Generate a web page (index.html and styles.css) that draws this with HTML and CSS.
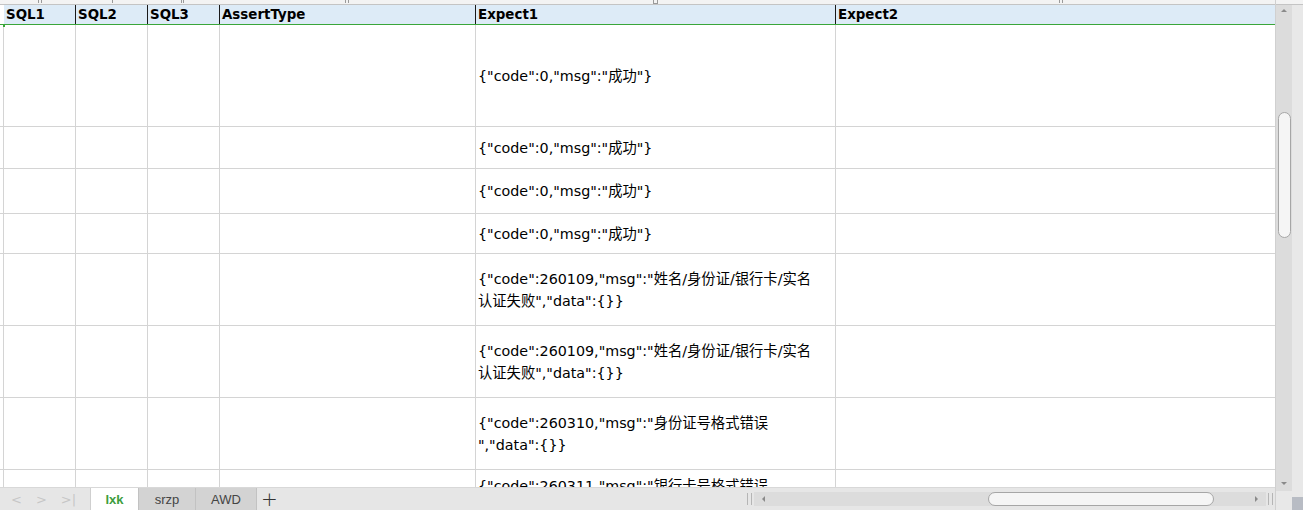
FILE: index.html
```html
<!DOCTYPE html>
<html>
<head>
<meta charset="utf-8">
<link rel="stylesheet" href="styles.css">
</head>
<body>
<div class="app">
  <div class="main">
    <div class="ruler">
      <span class="tick t1"></span><span class="tick t2"></span><span class="tick t3"></span><span class="tick t4"></span><span class="tick t5"></span><span class="tick t6"></span>
    </div>
    <div class="sheet">
      <div class="row head">
        <div class="c c0"></div>
        <div class="c w1">SQL1</div>
        <div class="c w1">SQL2</div>
        <div class="c w1">SQL3</div>
        <div class="c w2">AssertType</div>
        <div class="c w3">Expect1</div>
        <div class="c w4">Expect2</div>
      </div>
      <div class="row h102">
        <div class="c c0"></div><div class="c w1"></div><div class="c w1"></div><div class="c w1"></div><div class="c w2"></div>
        <div class="c w3">{"code":0,"msg":"成功"}</div><div class="c w4"></div>
      </div>
      <div class="row h42">
        <div class="c c0"></div><div class="c w1"></div><div class="c w1"></div><div class="c w1"></div><div class="c w2"></div>
        <div class="c w3">{"code":0,"msg":"成功"}</div><div class="c w4"></div>
      </div>
      <div class="row h45">
        <div class="c c0"></div><div class="c w1"></div><div class="c w1"></div><div class="c w1"></div><div class="c w2"></div>
        <div class="c w3">{"code":0,"msg":"成功"}</div><div class="c w4"></div>
      </div>
      <div class="row h40">
        <div class="c c0"></div><div class="c w1"></div><div class="c w1"></div><div class="c w1"></div><div class="c w2"></div>
        <div class="c w3">{"code":0,"msg":"成功"}</div><div class="c w4"></div>
      </div>
      <div class="row h72">
        <div class="c c0"></div><div class="c w1"></div><div class="c w1"></div><div class="c w1"></div><div class="c w2"></div>
        <div class="c w3">{"code":260109,"msg":"姓名/身份证/银行卡/实名<br>认证失败","data":{}}</div><div class="c w4"></div>
      </div>
      <div class="row h72">
        <div class="c c0"></div><div class="c w1"></div><div class="c w1"></div><div class="c w1"></div><div class="c w2"></div>
        <div class="c w3">{"code":260109,"msg":"姓名/身份证/银行卡/实名<br>认证失败","data":{}}</div><div class="c w4"></div>
      </div>
      <div class="row h72">
        <div class="c c0"></div><div class="c w1"></div><div class="c w1"></div><div class="c w1"></div><div class="c w2"></div>
        <div class="c w3">{"code":260310,"msg":"身份证号格式错误<br>","data":{}}</div><div class="c w4"></div>
      </div>
      <div class="row h72 last">
        <div class="c c0"></div><div class="c w1"></div><div class="c w1"></div><div class="c w1"></div><div class="c w2"></div>
        <div class="c w3 top">{"code":260311,"msg":"银行卡号格式错误<br>","data":{}}</div><div class="c w4"></div>
      </div>
    </div>
    <div class="bottombar">
      <div class="nav">
        <span class="navbtn">&lt;</span><span class="navbtn">&gt;</span><span class="navbtn">&gt;|</span>
      </div>
      <div class="tab active">lxk</div>
      <div class="tab">srzp</div>
      <div class="tab">AWD</div>
      <div class="plus">+</div>
      <div class="hspace"></div>
      <div class="grip"></div>
      <div class="htrack">
        <span class="arrow-l"></span>
        <div class="hthumb"></div>
        <span class="arrow-r"></span>
      </div>
      <div class="grip"></div>
    </div>
  </div>
  <div class="vbar">
    <div class="vtop"></div>
    <div class="vtrack">
      <span class="arrow-u"></span>
      <div class="vthumb"></div>
      <span class="arrow-d"></span>
    </div>
    <div class="corner"></div>
  </div>
</div>
</body>
</html>
```
FILE: styles.css
```css
* { box-sizing: border-box; }
html, body { margin: 0; padding: 0; }
body {
  width: 1303px;
  height: 510px;
  overflow: hidden;
  background: #ffffff;
  font-family: "DejaVu Sans", "Noto Sans CJK SC", sans-serif;
  color: #000;
}
.app {
  display: flex;
  width: 1303px;
  height: 510px;
}
.main {
  width: 1275px;
  display: flex;
  flex-direction: column;
  height: 510px;
}
.ruler {
  height: 5px;
  background: #f3f3f3;
  border-bottom: 1px solid #c4c4c4;
  position: relative;
  overflow: hidden;
}
.tick {
  position: absolute;
  top: 0;
  width: 4px;
  height: 3px;
  border-left: 1px solid #9a9a9a;
  border-right: 1px solid #9a9a9a;
}
.t1 { left: 38px; } .t2 { left: 112px; width: 1px; border-right: none; } .t3 { left: 181px; width: 3px; }
.t4 { left: 345px; } .t5 { left: 653px; width: 5px; height: 4px; border-bottom: 1px solid #9a9a9a; } .t6 { left: 1059px; }
.sheet {
  flex: 1;
  overflow: hidden;
  background: #fff;
}
.row {
  display: flex;
  border-bottom: 1px solid #d4d4d4;
}
.c {
  border-right: 1px solid #d4d4d4;
  padding-left: 2px;
  display: flex;
  align-items: center;
  font-size: 14.3px;
  line-height: 22px;
  white-space: nowrap;
  flex-shrink: 0;
}
.c0 { width: 4px; padding: 0; }
.w1 { width: 72px; }
.w2 { width: 256px; }
.w3 { width: 360px; }
.w4 { width: 439px; border-right: none; }
.head {
  height: 20px;
  background: #ddebf7;
  border-bottom: 1px solid #3aa63a;
  position: relative;
}
.head .c {
  border-right-color: #1a1a1a;
  font-family: "DejaVu Sans", sans-serif;
  font-weight: bold;
  font-size: 13.4px;
  line-height: 19px;
}
.head .c0 { background: #fff; border-right: none; width: 4px; }
.head .w4 { border-right: none; }
.head::after {
  content: "";
  position: absolute;
  left: 3px;
  bottom: -3px;
  width: 2px;
  height: 3px;
  background: #3aa63a;
}
.h102 { height: 102px; }
.h42 { height: 42px; }
.h45 { height: 45px; }
.h40 { height: 40px; }
.h72 { height: 72px; }
.last { border-bottom: none; }
.top { align-items: flex-start; padding-top: 5px; display: block; }
.bottombar {
  height: 23px;
  background: #e6e6e6;
  display: flex;
  align-items: stretch;
  border-top: 1px solid #d8d8d8;
}
.nav {
  width: 90px;
  display: flex;
  align-items: center;
  padding-left: 11px;
  gap: 14px;
  color: #c6c6c6;
  font-family: "DejaVu Sans", sans-serif;
  font-size: 13px;
}
.tab {
  display: flex;
  align-items: center;
  justify-content: center;
  font-family: "Liberation Sans", Arial, sans-serif;
  font-size: 13px;
  color: #444;
  background: #d3d3d3;
  border-left: 1px solid #c2c2c2;
}
.tab:nth-child(3) { width: 57px; }
.tab:nth-child(4) { width: 61px; }
.tab.active {
  width: 48px;
  background: #fff;
  color: #3d9d3d;
  font-weight: bold;
  border-left: 1px solid #cfcfcf;
}
.plus {
  width: 26px;
  display: flex;
  align-items: center;
  justify-content: center;
  font-family: "DejaVu Sans", sans-serif;
  font-size: 20px;
  font-weight: 300;
  color: #333;
  border-left: 1px solid #c2c2c2;
  line-height: 1;
}
.hspace { width: 463px; }
.grip {
  width: 9px;
  display: flex;
  align-items: center;
  justify-content: center;
}
.grip::before {
  content: "";
  width: 3px;
  height: 12px;
  border-left: 1px solid #b5b5b5;
  border-right: 1px solid #b5b5b5;
}
.htrack {
  width: 512px;
  margin: 4px 0 4px 0;
  background: #dcdcdc;
  display: flex;
  align-items: center;
  position: relative;
}
.arrow-l, .arrow-r {
  width: 0; height: 0;
  border-top: 3px solid transparent;
  border-bottom: 3px solid transparent;
  position: absolute;
  top: 4px;
}
.arrow-l { left: 8px; border-right: 3px solid #8a8a8a; }
.arrow-r { right: 8px; border-left: 3px solid #8a8a8a; }
.hthumb {
  position: absolute;
  left: 234px;
  top: 0;
  width: 226px;
  height: 14px;
  background: #f5f5f5;
  border: 1px solid #a6a6a6;
  border-radius: 7px;
}
.vbar {
  width: 28px;
  height: 510px;
  background: #e8e8e8;
  border-left: 1px solid #d0d0d0;
  display: flex;
  flex-direction: column;
}
.vtop {
  height: 5px;
  background: #f3f3f3;
  border-bottom: 1px solid #c4c4c4;
}
.vtrack {
  width: 16px;
  flex: 1;
  background: #dcdcdc;
  position: relative;
  margin-bottom: 19px;
}
.arrow-u, .arrow-d {
  position: absolute;
  left: 5px;
  width: 0; height: 0;
  border-left: 3px solid transparent;
  border-right: 3px solid transparent;
}
.arrow-u { top: 4px; border-bottom: 3px solid #8a8a8a; }
.arrow-d { bottom: 6px; border-top: 3px solid #8a8a8a; }
.vthumb {
  position: absolute;
  left: 2px;
  top: 107px;
  width: 13px;
  height: 126px;
  background: #f5f5f5;
  border: 1px solid #a6a6a6;
  border-radius: 7px;
}
.corner {
  position: absolute;
  right: 0;
  bottom: 0;
  width: 11px;
  height: 13px;
  background: #b8bcc4;
}
```
